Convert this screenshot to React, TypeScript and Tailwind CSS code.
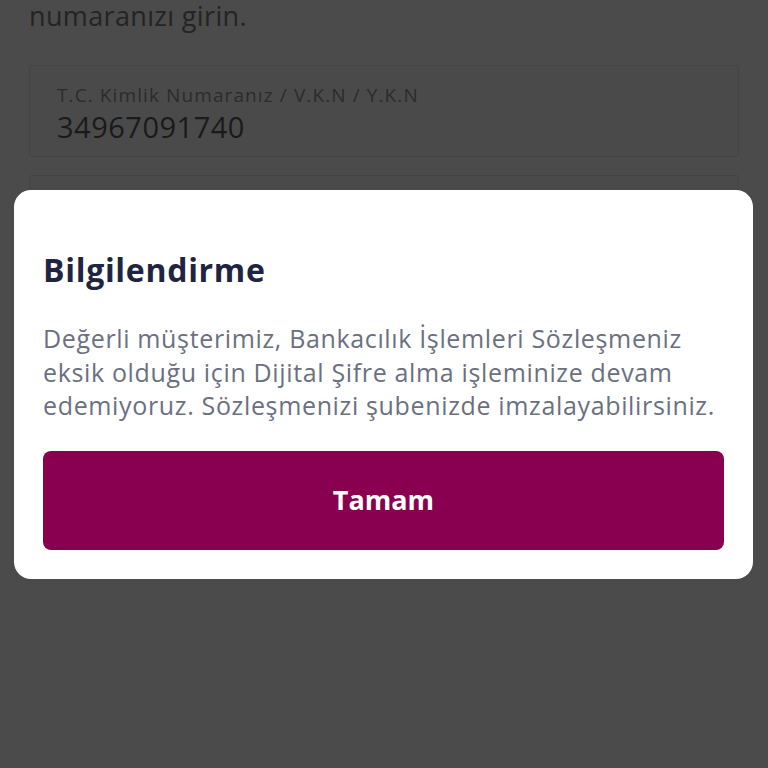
export default function App() {
  return (
    <div
      className="relative w-[768px] h-[768px] overflow-hidden bg-[#4b4b4b]"
      style={{ fontFamily: '"Open Sans", "Noto Sans", sans-serif' }}
    >
      {/* page behind the dimmed overlay */}
      <div className="px-[29px] -mt-[2px]">
        <p className="text-[27px] leading-[36px] tracking-[0.35px] text-[#242424]">numaranızı girin.</p>
        <div className="mt-[31px] h-[92px] rounded-[3px] border border-[#444444] bg-[#4a4a4a] pl-[27px] pt-[17px]">
          <div className="text-[19px] leading-[24px] tracking-[1.1px] text-[#2c2c2c]">T.C. Kimlik Numaranız / V.K.N / Y.K.N</div>
          <div className="mt-[3px] text-[29px] leading-[34px] tracking-[0.5px] text-[#1a1a1a]">34967091740</div>
        </div>
        <div className="mt-[18px] h-[92px] rounded-[3px] border border-[#444444] bg-[#4a4a4a]" />
      </div>

      {/* modal */}
      <div className="absolute left-[14px] top-[190px] w-[739px] rounded-[17px] bg-white px-[29px] pt-[60px] pb-[29px]">
        <h2 className="text-[32px] leading-[40px] tracking-[0.7px] font-bold text-[#1f2540]">Bilgilendirme</h2>
        <p className="mt-[32px] text-[25px] leading-[33.5px] tracking-[0.65px] text-[#6b7080]">
          Değerli müşterimiz, Bankacılık İşlemleri Sözleşmeniz
          <br />
          eksik olduğu için Dijital Şifre alma işleminize devam
          <br />
          edemiyoruz. Sözleşmenizi şubenizde imzalayabilirsiniz.
        </p>
        <button className="mt-[28px] flex h-[99px] w-full items-center justify-center rounded-[8px] bg-[#8a0051] text-[27px] font-bold text-white">
          Tamam
        </button>
      </div>
    </div>
  );
}
